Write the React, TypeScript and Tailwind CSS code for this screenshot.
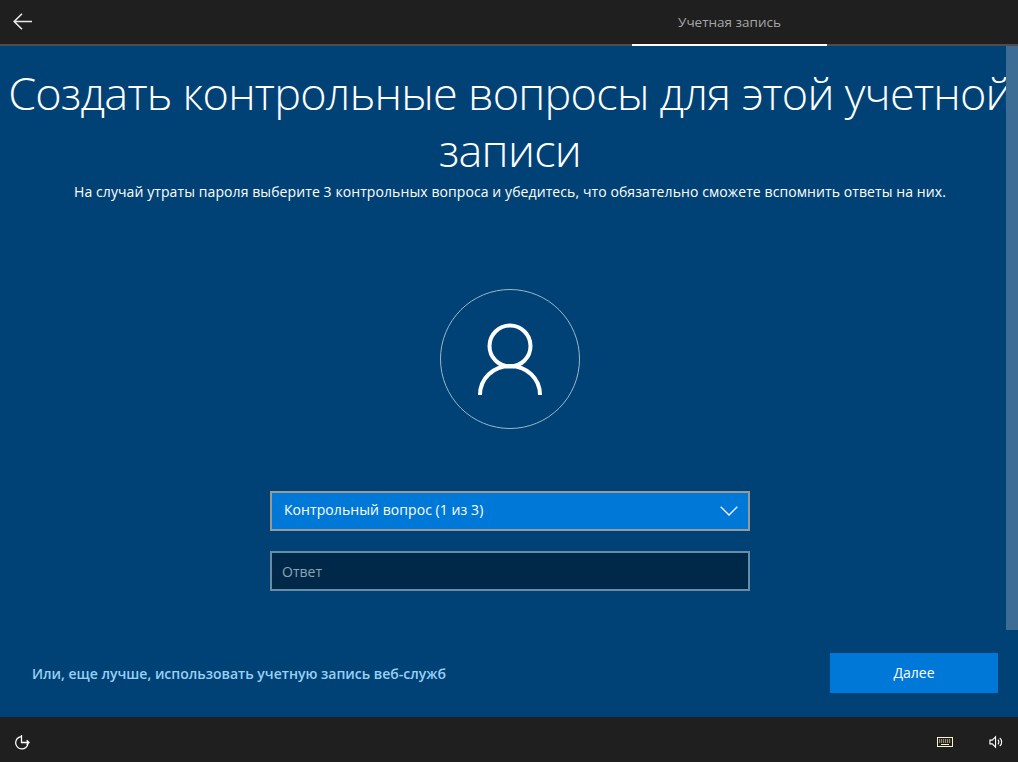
export default function App() {
  const font = { fontFamily: '"Open Sans", "Noto Sans", sans-serif' };
  return (
    <div style={font} className="w-[1018px] h-[762px] overflow-hidden flex flex-col bg-[#004275] text-white">
      <header className="h-[46px] shrink-0 flex bg-[#1f1f1f] border-b-2 border-[#4c4c4c]">
        <div className="w-[632px] flex items-center pl-[13px] pb-[2px]">
          <svg width="19" height="17" viewBox="0 0 19 17" fill="none" stroke="#e8e8e8" strokeWidth="1.6">
            <path d="M9 .7 1.2 8.5 9 16.3M1.2 8.5H19" />
          </svg>
        </div>
        <div className="w-[195px] h-[46px] border-b-2 border-white flex items-center justify-center text-[13.5px] text-[#a6a6a6]">
          Учетная запись
        </div>
      </header>

      <main className="relative flex-1 flex flex-col items-center">
        <div className="absolute right-0 top-0 w-[12px] h-[584px] bg-[#3d6d95]" />
        <h1 className="w-[1018px] text-center text-[45px] font-light leading-[57px] mt-[18px] pl-[2px] tracking-[-0.75px]">
          Создать контрольные вопросы для этой учетной записи
        </h1>
        <p className="text-[14px] leading-[20px] mt-[4px] pl-[2px] font-normal whitespace-nowrap tracking-[0.09px]">
          На случай утраты пароля выберите 3 контрольных вопроса и убедитесь, что обязательно сможете вспомнить ответы на них.
        </p>
        <div className="w-[140px] h-[140px] mt-[87px] ml-[2px] rounded-full border border-[#9db6ca] flex items-center justify-center">
          <svg width="64" height="72" viewBox="0 0 64 72" fill="none" stroke="#fff" strokeWidth="4" className="mt-[-1px]">
            <circle cx="32" cy="23" r="20.5" />
            <path d="M2 72c0-16.6 13.4-29 30-29s30 12.4 30 29" />
          </svg>
        </div>
        <div className="w-[480px] h-[40px] mt-[62px] ml-[2px] bg-[#0078d7] border-2 border-[#999999] flex items-center justify-between pl-[12px] pr-[10px] text-[14px] tracking-[0.07px]">
          <span className="mt-[-4px]">Контрольный вопрос (1 из 3)</span>
          <svg width="18" height="10" viewBox="0 0 18 10" fill="none" stroke="#fff" strokeWidth="1.3">
            <path d="M.7.7 9 9 17.3.7" />
          </svg>
        </div>
        <div className="w-[480px] h-[40px] mt-[20px] ml-[2px] bg-[#002949] border-2 border-[#668ca8] flex items-center pl-[10px] text-[14px] text-[#8ea4b5]">
          Ответ
        </div>
        <div className="w-full flex items-center justify-between pl-[32px] pr-[20px] mt-[62px]">
          <span className="text-[14px] font-semibold text-[#99d0f5]">
            Или, еще лучше, использовать учетную запись веб-служб
          </span>
          <button className="w-[168px] h-[40px] bg-[#0078d7] text-[14px] text-white pb-[2px]">Далее</button>
        </div>
      </main>

      <footer className="h-[45px] shrink-0 bg-[#1f1f1f] flex items-center justify-between pl-[14px] pr-[15px] pt-[5px]">
        <svg width="17" height="17" viewBox="0 0 17 17" fill="none" stroke="#ffffff" strokeWidth="1.3">
          <path d="M7 2.600A6.200 6.200 0 1 0 14 9.500M7.500 1v7.500H15M12.600 6.200 15 8.500l-2.400 2.300" />
        </svg>
        <div className="flex items-center gap-[36px]">
          <svg width="16" height="10" viewBox="0 0 16 10" fill="none" stroke="#fff2c8" strokeWidth="1">
            <rect x=".5" y=".5" width="15" height="9" />
            <path d="M2 3h12M2 5h12" strokeDasharray="1.200 .8" />
            <path d="M4 7.500h8" />
          </svg>
          <svg width="14" height="14" viewBox="0 0 15 14" fill="none" stroke="#ffffff" strokeWidth="1.2">
            <path d="M1 5h2.500L7 1.500v11L3.500 9H1zM9.500 4.500a3.500 3.500 0 0 1 0 5M11.500 2.500a6 6 0 0 1 0 9" />
          </svg>
        </div>
      </footer>
    </div>
  );
}
